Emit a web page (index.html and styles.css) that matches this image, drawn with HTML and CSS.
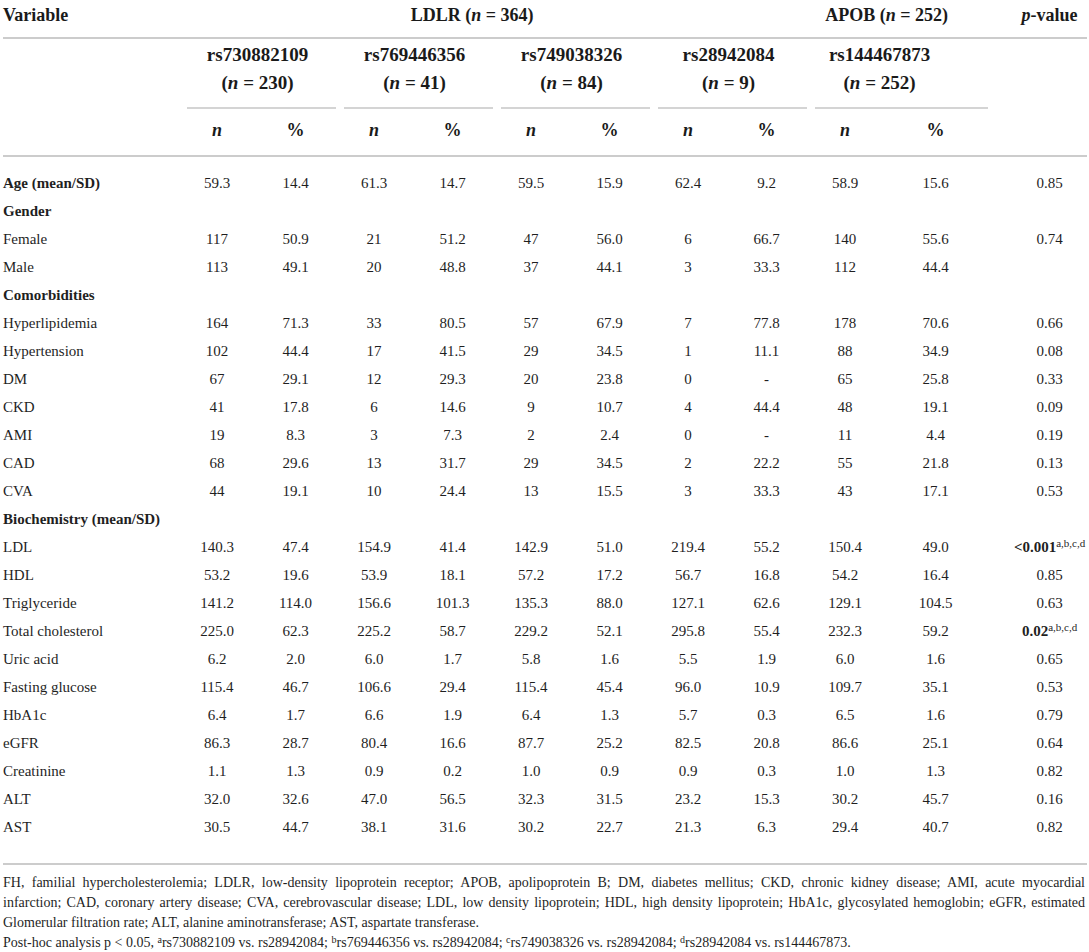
FILE: index.html
```html
<!DOCTYPE html>
<html lang="en">
<head>
<meta charset="utf-8">
<title>Table</title>
<link rel="stylesheet" href="styles.css">
</head>
<body>
<div class="page">
<table class="t">
<colgroup>
<col class="c-var">
<col class="c-n"><col class="c-p">
<col class="c-n"><col class="c-p">
<col class="c-n"><col class="c-p">
<col class="c-n"><col class="c-p">
<col class="c-n"><col class="c-p5">
<col class="c-pv">
</colgroup>
<thead>
<tr class="h1">
<th class="var">Variable</th>
<th colspan="8" class="ldlr">LDLR (<i>n</i> = 364)</th>
<th colspan="2" class="apob">APOB (<i>n</i> = 252)</th>
<th class="pv"><i>p</i>-value</th>
</tr>
<tr class="h2">
<th class="blank"></th>
<th colspan="2" class="g"><div class="grp"><div class="l1">rs730882109</div><div class="l2">(<i>n</i> = 230)</div></div></th>
<th colspan="2" class="g"><div class="grp"><div class="l1">rs769446356</div><div class="l2">(<i>n</i> = 41)</div></div></th>
<th colspan="2" class="g"><div class="grp"><div class="l1">rs749038326</div><div class="l2">(<i>n</i> = 84)</div></div></th>
<th colspan="2" class="g"><div class="grp"><div class="l1">rs28942084</div><div class="l2">(<i>n</i> = 9)</div></div></th>
<th colspan="2" class="g"><div class="grp g5"><div class="l1">rs144467873</div><div class="l2">(<i>n</i> = 252)</div></div></th>
<th class="blank"></th>
</tr>
<tr class="h3">
<th></th>
<th><i>n</i></th><th>%</th>
<th><i>n</i></th><th>%</th>
<th><i>n</i></th><th>%</th>
<th><i>n</i></th><th>%</th>
<th><i>n</i></th><th>%</th>
<th></th>
</tr>
</thead>
<tbody>
<tr class="first"><td class="lbl b">Age (mean/SD)</td><td>59.3</td><td>14.4</td><td>61.3</td><td>14.7</td><td>59.5</td><td>15.9</td><td>62.4</td><td>9.2</td><td>58.9</td><td>15.6</td><td class="pv">0.85</td></tr>
<tr><td class="lbl b">Gender</td><td></td><td></td><td></td><td></td><td></td><td></td><td></td><td></td><td></td><td></td><td class="pv"></td></tr>
<tr><td class="lbl">Female</td><td>117</td><td>50.9</td><td>21</td><td>51.2</td><td>47</td><td>56.0</td><td>6</td><td>66.7</td><td>140</td><td>55.6</td><td class="pv">0.74</td></tr>
<tr><td class="lbl">Male</td><td>113</td><td>49.1</td><td>20</td><td>48.8</td><td>37</td><td>44.1</td><td>3</td><td>33.3</td><td>112</td><td>44.4</td><td class="pv"></td></tr>
<tr><td class="lbl b">Comorbidities</td><td></td><td></td><td></td><td></td><td></td><td></td><td></td><td></td><td></td><td></td><td class="pv"></td></tr>
<tr><td class="lbl">Hyperlipidemia</td><td>164</td><td>71.3</td><td>33</td><td>80.5</td><td>57</td><td>67.9</td><td>7</td><td>77.8</td><td>178</td><td>70.6</td><td class="pv">0.66</td></tr>
<tr><td class="lbl">Hypertension</td><td>102</td><td>44.4</td><td>17</td><td>41.5</td><td>29</td><td>34.5</td><td>1</td><td>11.1</td><td>88</td><td>34.9</td><td class="pv">0.08</td></tr>
<tr><td class="lbl">DM</td><td>67</td><td>29.1</td><td>12</td><td>29.3</td><td>20</td><td>23.8</td><td>0</td><td>-</td><td>65</td><td>25.8</td><td class="pv">0.33</td></tr>
<tr><td class="lbl">CKD</td><td>41</td><td>17.8</td><td>6</td><td>14.6</td><td>9</td><td>10.7</td><td>4</td><td>44.4</td><td>48</td><td>19.1</td><td class="pv">0.09</td></tr>
<tr><td class="lbl">AMI</td><td>19</td><td>8.3</td><td>3</td><td>7.3</td><td>2</td><td>2.4</td><td>0</td><td>-</td><td>11</td><td>4.4</td><td class="pv">0.19</td></tr>
<tr><td class="lbl">CAD</td><td>68</td><td>29.6</td><td>13</td><td>31.7</td><td>29</td><td>34.5</td><td>2</td><td>22.2</td><td>55</td><td>21.8</td><td class="pv">0.13</td></tr>
<tr><td class="lbl">CVA</td><td>44</td><td>19.1</td><td>10</td><td>24.4</td><td>13</td><td>15.5</td><td>3</td><td>33.3</td><td>43</td><td>17.1</td><td class="pv">0.53</td></tr>
<tr><td class="lbl b">Biochemistry (mean/SD)</td><td></td><td></td><td></td><td></td><td></td><td></td><td></td><td></td><td></td><td></td><td class="pv"></td></tr>
<tr><td class="lbl">LDL</td><td>140.3</td><td>47.4</td><td>154.9</td><td>41.4</td><td>142.9</td><td>51.0</td><td>219.4</td><td>55.2</td><td>150.4</td><td>49.0</td><td class="pv"><b>&lt;0.001</b><sup>a,b,c,d</sup></td></tr>
<tr><td class="lbl">HDL</td><td>53.2</td><td>19.6</td><td>53.9</td><td>18.1</td><td>57.2</td><td>17.2</td><td>56.7</td><td>16.8</td><td>54.2</td><td>16.4</td><td class="pv">0.85</td></tr>
<tr><td class="lbl">Triglyceride</td><td>141.2</td><td>114.0</td><td>156.6</td><td>101.3</td><td>135.3</td><td>88.0</td><td>127.1</td><td>62.6</td><td>129.1</td><td>104.5</td><td class="pv">0.63</td></tr>
<tr><td class="lbl">Total cholesterol</td><td>225.0</td><td>62.3</td><td>225.2</td><td>58.7</td><td>229.2</td><td>52.1</td><td>295.8</td><td>55.4</td><td>232.3</td><td>59.2</td><td class="pv"><b>0.02</b><sup>a,b,c,d</sup></td></tr>
<tr><td class="lbl">Uric acid</td><td>6.2</td><td>2.0</td><td>6.0</td><td>1.7</td><td>5.8</td><td>1.6</td><td>5.5</td><td>1.9</td><td>6.0</td><td>1.6</td><td class="pv">0.65</td></tr>
<tr><td class="lbl">Fasting glucose</td><td>115.4</td><td>46.7</td><td>106.6</td><td>29.4</td><td>115.4</td><td>45.4</td><td>96.0</td><td>10.9</td><td>109.7</td><td>35.1</td><td class="pv">0.53</td></tr>
<tr><td class="lbl">HbA1c</td><td>6.4</td><td>1.7</td><td>6.6</td><td>1.9</td><td>6.4</td><td>1.3</td><td>5.7</td><td>0.3</td><td>6.5</td><td>1.6</td><td class="pv">0.79</td></tr>
<tr><td class="lbl">eGFR</td><td>86.3</td><td>28.7</td><td>80.4</td><td>16.6</td><td>87.7</td><td>25.2</td><td>82.5</td><td>20.8</td><td>86.6</td><td>25.1</td><td class="pv">0.64</td></tr>
<tr><td class="lbl">Creatinine</td><td>1.1</td><td>1.3</td><td>0.9</td><td>0.2</td><td>1.0</td><td>0.9</td><td>0.9</td><td>0.3</td><td>1.0</td><td>1.3</td><td class="pv">0.82</td></tr>
<tr><td class="lbl">ALT</td><td>32.0</td><td>32.6</td><td>47.0</td><td>56.5</td><td>32.3</td><td>31.5</td><td>23.2</td><td>15.3</td><td>30.2</td><td>45.7</td><td class="pv">0.16</td></tr>
<tr class="last"><td class="lbl">AST</td><td>30.5</td><td>44.7</td><td>38.1</td><td>31.6</td><td>30.2</td><td>22.7</td><td>21.3</td><td>6.3</td><td>29.4</td><td>40.7</td><td class="pv">0.82</td></tr>
</tbody>
</table>
<div class="notes">
<div class="jl">FH, familial hypercholesterolemia; LDLR, low-density lipoprotein receptor; APOB, apolipoprotein B; DM, diabetes mellitus; CKD, chronic kidney disease; AMI, acute myocardial</div>
<div class="jl">infarction; CAD, coronary artery disease; CVA, cerebrovascular disease; LDL, low density lipoprotein; HDL, high density lipoprotein; HbA1c, glycosylated hemoglobin; eGFR, estimated</div>
<div>Glomerular filtration rate; ALT, alanine aminotransferase; AST, aspartate transferase.</div>
<div>Post-hoc analysis p &lt; 0.05, <sup class="fs">a</sup>rs730882109 vs. rs28942084; <sup class="fs">b</sup>rs769446356 vs. rs28942084; <sup class="fs">c</sup>rs749038326 vs. rs28942084; <sup class="fs">d</sup>rs28942084 vs. rs144467873.</div>
</div>
</div>
</body>
</html>
```

FILE: styles.css
```css
html, body {
  margin: 0;
  padding: 0;
  background: #ffffff;
}

body {
  color: #1f1f1f;
  font-family: "Liberation Serif", "Times New Roman", serif;
}

.page {
  padding: 0 2px 0 3px;
}

.t {
  border-collapse: separate;
  border-spacing: 0;
  table-layout: fixed;
  width: 1084px;
}

.c-var { width: 180px; }
.c-n { width: 68px; }
.c-p { width: 89px; }
.c-p5 { width: 113px; }
.c-pv { width: 95px; }

th {
  font-weight: bold;
  font-size: 18px;
  padding: 0;
  text-align: center;
  color: #1a1a1a;
}

.h1 th {
  line-height: 24px;
  padding: 3px 0 10px;
  border-bottom: 2px solid #cccccc;
}

.h1 th.var {
  text-align: left;
}

.h1 th.ldlr {
  padding-right: 50px;
}

.h1 th.apob {
  padding-right: 30px;
}

.h1 th.pv {
  padding-left: 20px;
}

.h2 th {
  line-height: 28px;
  padding: 2px 0 0;
}

.h2 th.g {
  padding: 2px 4px 0;
  font-size: 19px;
}

.grp {
  padding-bottom: 10px;
  border-bottom: 2px solid #d4d4d4;
}

.grp .l1,
.grp .l2 {
  padding-right: 8px;
}

.grp.g5 .l1,
.grp.g5 .l2 {
  padding-right: 44px;
}

.h3 th {
  line-height: 24px;
  padding: 9px 0 13px;
  border-bottom: 2px solid #cccccc;
}

td {
  font-size: 15px;
  line-height: 28px;
  padding: 0;
  text-align: center;
  white-space: nowrap;
}

td.lbl {
  text-align: left;
}

td.b {
  font-weight: bold;
}

td.pv {
  padding-left: 20px;
}

tr.first td {
  padding-top: 12px;
}

tr.last td {
  padding-bottom: 22px;
  border-bottom: 2px solid #cccccc;
}

td sup {
  font-size: 11px;
  line-height: 0;
  vertical-align: 0.5em;
}

.notes {
  margin-top: 8px;
  font-size: 14px;
  line-height: 20px;
  width: 1082px;
  color: #1f1f1f;
}

.jl {
  text-align: justify;
  text-align-last: justify;
  white-space: nowrap;
}

.fs {
  font-size: 10px;
  line-height: 0;
  vertical-align: 0.45em;
}
```
